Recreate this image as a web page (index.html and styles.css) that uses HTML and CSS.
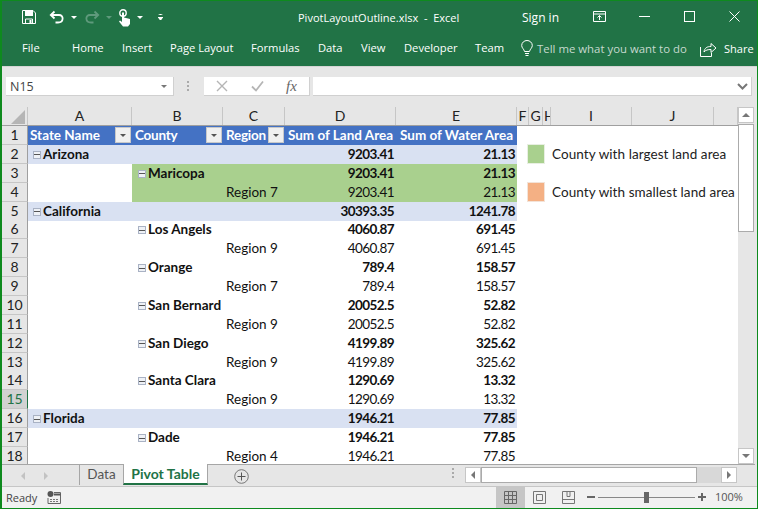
FILE: index.html
```html
<!DOCTYPE html>
<html>

<head>
  <meta charset="utf-8">
  <title>PivotLayoutOutline.xlsx - Excel</title>
  <link rel="stylesheet" href="styles.css">
</head>

<body>
  <div class="window">
    <div class="titlebar">
      <div class="qat">
        <svg class="ic-save" width="14" height="14" viewBox="0 0 14 14"><path d="M.5.5h10.5l2.5 2.5v10.5H.5z" fill="none" stroke="#fff"/><rect x="3" y="1" width="8" height="5" fill="#fff"/><path d="M3.5 13V9h7v4" fill="none" stroke="#fff"/><rect x="7.500" y="10" width="2" height="3" fill="#fff"/></svg>
        <svg class="ic-undo" width="16" height="14" viewBox="0 0 16 14"><path d="M5.500 1.500 1.800 5l3.700 3.500M2 5h8c5 0 5 7.500-1 7.500H6.500" fill="none" stroke="#fff" stroke-width="1.800"/></svg>
        <span class="caret ic-c1"></span>
        <svg class="ic-redo" width="16" height="14" viewBox="0 0 16 14"><path d="M10.500 1.500 14.200 5l-3.700 3.500M14 5H6c-5 0-5 7.500 1 7.500h2.500" fill="none" stroke="#5f9a7c" stroke-width="1.800"/></svg>
        <span class="caret dim ic-c2"></span>
        <svg class="ic-touch" width="14" height="18" viewBox="0 0 14 18"><circle cx="5" cy="4" r="3.200" fill="none" stroke="#fff" stroke-width="1.400"/><path d="M4 3.500h2v5l6 1.500v5l-2 2.500H5l-4-5 1-1 2 1.500z" fill="#fff"/></svg>
        <span class="caret ic-c3"></span>
        <span class="more ic-more"></span>
      </div>
      <div class="doc-title">PivotLayoutOutline.xlsx&nbsp; -&nbsp; Excel</div>
      <div class="signin">Sign in</div>
      <div class="win-btns">
        <svg width="14" height="11" viewBox="0 0 14 11"><path d="M.5.500h12v10H.5zM.5 3h12M6.500 9V4.500M4.500 6.500l2-2 2 2" fill="none" stroke="#fff"/></svg>
        <svg width="11" height="11" viewBox="0 0 11 11"><path d="M0 5.500h11" stroke="#fff"/></svg>
        <svg width="11" height="11" viewBox="0 0 11 11"><rect x=".5" y=".5" width="10" height="10" fill="none" stroke="#fff"/></svg>
        <svg width="11" height="11" viewBox="0 0 11 11"><path d="M.5.500l10 10M10.500.500l-10 10" stroke="#fff"/></svg>
      </div>
    </div>

    <div class="ribbon">
      <span class="tab tab-file">File</span>
      <span class="tab tab-home">Home</span>
      <span class="tab tab-insert">Insert</span>
      <span class="tab tab-layout">Page Layout</span>
      <span class="tab tab-formulas">Formulas</span>
      <span class="tab tab-data">Data</span>
      <span class="tab tab-view">View</span>
      <span class="tab tab-dev">Developer</span>
      <span class="tab tab-team">Team</span>
      <svg class="bulb" width="12" height="17" viewBox="0 0 12 17"><path d="M3.500 11.500C3 9 .7 8 .7 5.500a5.300 5 0 0 1 10.600 0C11.300 8 9 9 8.500 11.500zM4 13.500h4M4.500 15.500h3" fill="none" stroke="#fff"/></svg>
      <span class="tell">Tell me what you want to do</span>
      <svg class="share-ic" width="17" height="15" viewBox="0 0 17 15"><path d="M.5 5v9.500h11V11M4 10c.5-4 3-5.500 7-5.500V1.500l5 4.500-5 4.500V7.500c-3 0-5.500.5-7 2.500z" fill="none" stroke="#fff"/></svg>
      <span class="share">Share</span>
    </div>

    <div class="formula-band">
      <div class="name-box"><span>N15</span><i class="caret grey"></i></div>
      <div class="grip"></div>
      <div class="fx-buttons">
        <svg width="12" height="12" viewBox="0 0 12 12"><path d="M1 1l10 10M11 1 1 11" stroke="#b5b5b5" stroke-width="1.400"/></svg>
        <svg width="13" height="12" viewBox="0 0 13 12"><path d="M1 6.500l4 4 7-9" fill="none" stroke="#b5b5b5" stroke-width="1.800"/></svg>
        <span class="fx">fx</span>
      </div>
      <div class="formula-input"><svg width="11" height="7" viewBox="0 0 11 7"><path d="M1 1l4.500 4.500L10 1" fill="none" stroke="#777" stroke-width="2"/></svg></div>
    </div>

    <div class="sheet-area">
      <div class="sheet">
        <div class="row col-heads">
          <div class="corner"><i></i></div>
          <div>A</div><div>B</div><div>C</div><div>D</div><div>E</div><div>F</div><div>G</div><div class="clip">H</div><div>I</div><div>J</div><div></div>
        </div>

        <div class="row head">
          <div class="rh">1</div>
          <div class="c">State Name<b class="filter"></b></div>
          <div class="c">County<b class="filter"></b></div>
          <div class="c">Region<b class="filter"></b></div>
          <div class="c num-head">Sum of Land Area</div>
          <div class="c num-head">Sum of Water Area</div>
        </div>
        <div class="row total band">
          <div class="rh">2</div>
          <div class="c"><i class="minus"></i>Arizona</div><div class="c"></div><div class="c"></div><div class="c n">9203.41</div><div class="c n">21.13</div>
        </div>
        <div class="row total">
          <div class="rh">3</div>
          <div class="c"></div><div class="c green sub"><i class="minus"></i>Maricopa</div><div class="c green"></div><div class="c green n">9203.41</div><div class="c green n">21.13</div>
        </div>
        <div class="row">
          <div class="rh">4</div>
          <div class="c"></div><div class="c green"></div><div class="c green">Region 7</div><div class="c green n">9203.41</div><div class="c green n">21.13</div>
        </div>
        <div class="row total band">
          <div class="rh">5</div>
          <div class="c"><i class="minus"></i>California</div><div class="c"></div><div class="c"></div><div class="c n">30393.35</div><div class="c n">1241.78</div>
        </div>
        <div class="row total">
          <div class="rh">6</div>
          <div class="c"></div><div class="c sub"><i class="minus"></i>Los Angels</div><div class="c"></div><div class="c n">4060.87</div><div class="c n">691.45</div>
        </div>
        <div class="row">
          <div class="rh">7</div>
          <div class="c"></div><div class="c"></div><div class="c">Region 9</div><div class="c n">4060.87</div><div class="c n">691.45</div>
        </div>
        <div class="row total">
          <div class="rh">8</div>
          <div class="c"></div><div class="c sub"><i class="minus"></i>Orange</div><div class="c"></div><div class="c n">789.4</div><div class="c n">158.57</div>
        </div>
        <div class="row">
          <div class="rh">9</div>
          <div class="c"></div><div class="c"></div><div class="c">Region 7</div><div class="c n">789.4</div><div class="c n">158.57</div>
        </div>
        <div class="row total">
          <div class="rh">10</div>
          <div class="c"></div><div class="c sub"><i class="minus"></i>San Bernard</div><div class="c"></div><div class="c n">20052.5</div><div class="c n">52.82</div>
        </div>
        <div class="row">
          <div class="rh">11</div>
          <div class="c"></div><div class="c"></div><div class="c">Region 9</div><div class="c n">20052.5</div><div class="c n">52.82</div>
        </div>
        <div class="row total">
          <div class="rh">12</div>
          <div class="c"></div><div class="c sub"><i class="minus"></i>San Diego</div><div class="c"></div><div class="c n">4199.89</div><div class="c n">325.62</div>
        </div>
        <div class="row">
          <div class="rh">13</div>
          <div class="c"></div><div class="c"></div><div class="c">Region 9</div><div class="c n">4199.89</div><div class="c n">325.62</div>
        </div>
        <div class="row total">
          <div class="rh">14</div>
          <div class="c"></div><div class="c sub"><i class="minus"></i>Santa Clara</div><div class="c"></div><div class="c n">1290.69</div><div class="c n">13.32</div>
        </div>
        <div class="row">
          <div class="rh selected">15</div>
          <div class="c"></div><div class="c"></div><div class="c">Region 9</div><div class="c n">1290.69</div><div class="c n">13.32</div>
        </div>
        <div class="row total band">
          <div class="rh">16</div>
          <div class="c"><i class="minus"></i>Florida</div><div class="c"></div><div class="c"></div><div class="c n">1946.21</div><div class="c n">77.85</div>
        </div>
        <div class="row total">
          <div class="rh">17</div>
          <div class="c"></div><div class="c sub"><i class="minus"></i>Dade</div><div class="c"></div><div class="c n">1946.21</div><div class="c n">77.85</div>
        </div>
        <div class="row">
          <div class="rh">18</div>
          <div class="c"></div><div class="c"></div><div class="c">Region 4</div><div class="c n">1946.21</div><div class="c n">77.85</div>
        </div>

        <div class="legend legend-large"><i class="swatch sw-green"></i>County with largest land area</div>
        <div class="legend legend-small"><i class="swatch sw-orange"></i>County with smallest land area</div>
      </div>

      <div class="vscroll">
        <div class="sb-btn"><i class="tri-up"></i></div>
        <div class="sb-thumb"></div>
        <div class="sb-track"></div>
        <div class="sb-btn"><i class="tri-down"></i></div>
      </div>
    </div>

    <div class="tabs-bar">
      <i class="nav-left"></i>
      <i class="nav-right"></i>
      <div class="sheet-tab first">Data</div>
      <div class="sheet-tab active">Pivot Table</div>
      <div class="add-sheet"><svg width="15" height="15" viewBox="0 0 15 15"><circle cx="7.500" cy="7.500" r="6.800" fill="none" stroke="#777"/><path d="M7.500 3.500v8M3.500 7.500h8" stroke="#555"/></svg></div>
      <div class="grip tab-grip"></div>
      <div class="hscroll">
        <div class="sb-btn"><i class="tri-left"></i></div>
        <div class="h-thumb"></div>
        <div class="h-track"></div>
        <div class="sb-btn"><i class="tri-right"></i></div>
      </div>
    </div>

    <div class="statusbar">
      <span class="ready">Ready</span>
      <svg class="macro" width="14" height="13" viewBox="0 0 14 13"><circle cx="3.500" cy="3" r="3" fill="#555"/><path d="M7 1.500h6.500v11H1V7" fill="none" stroke="#666"/><path d="M7 3.500h6.500" stroke="#555" stroke-width="2"/><path d="M3 8.500h9M3 10.500h9" stroke="#777" stroke-dasharray="2 1"/></svg>
      <div class="views">
        <div class="view on"><svg width="13" height="13" viewBox="0 0 13 13"><path d="M.5.500h12v12H.5zM4.500.500v12M8.500.500v12M.5 4.500h12M.5 8.500h12" fill="none" stroke="#666"/></svg></div>
        <div class="view"><svg width="13" height="13" viewBox="0 0 13 13"><path d="M.5.500h12v12H.5zM3.500 3.500h6v6h-6z" fill="none" stroke="#777"/></svg></div>
        <div class="view"><svg width="13" height="13" viewBox="0 0 13 13"><path d="M.5.500h12v12H.5zM.5 8.500h12M5 .5v5h3V.5" fill="none" stroke="#777"/></svg></div>
      </div>
      <div class="zoom-ctl">
        <i class="z-minus"></i>
        <div class="z-slider"><i></i></div>
        <i class="z-plus"></i>
      </div>
      <span class="zoom-pct">100%</span>
    </div>
  </div>
</body>

</html>
```

FILE: styles.css
```css
* {
  box-sizing: border-box;
}

html, body {
  margin: 0;
  padding: 0;
  background: #e6e6e6;
}

i, b {
  display: block;
}

.window {
  width: 758px;
  height: 509px;
  display: flex;
  flex-direction: column;
  border: 1px solid #0e8a1e;
  border-left-width: 2px;
  overflow: hidden;
  font-family: "Open Sans", sans-serif;
}

/* title bar */
.titlebar {
  height: 32px;
  background: #217346;
  color: #fff;
  display: flex;
  align-items: center;
  flex: none;
  font-size: 11px;
}

.qat {
  width: 296px;
  height: 100%;
  position: relative;
  flex: none;
}

.qat svg, .qat span {
  position: absolute;
}

.ic-save { left: 20px; top: 9px; }
.ic-undo { left: 47px; top: 9px; }
.ic-c1 { left: 69px; top: 15px; }
.ic-redo { left: 82px; top: 9px; }
.ic-c2 { left: 104px; top: 15px; }
.ic-touch { left: 116px; top: 8px; }
.ic-c3 { left: 135px; top: 15px; }
.ic-more { left: 156px; top: 13px; }

.caret {
  display: block;
  width: 0;
  height: 0;
  border-left: 3px solid transparent;
  border-right: 3px solid transparent;
  border-top: 3px solid #fff;
}

.caret.dim {
  border-top-color: #5f9a7c;
}

.caret.grey {
  border-top-color: #777;
}

.more {
  display: block;
  width: 5px;
  height: 7px;
  border-top: 1px solid #fff;
  border-left: 2px solid transparent;
  border-right: 2px solid transparent;
  background: linear-gradient(#fff, #fff) center 2px / 5px 3px no-repeat;
  clip-path: polygon(0 0, 100% 0, 100% 50%, 50% 100%, 0 50%);
}

.doc-title {
  width: 224px;
  flex: none;
}

.signin {
  width: 71px;
  flex: none;
  font-size: 12px;
}

.win-btns {
  display: flex;
  align-items: center;
  gap: 34px;
}

.win-btns svg:first-child {
  margin-right: -2px;
}

.win-btns svg {
  position: relative;
  top: -1px;
}

/* ribbon tabs */
.ribbon {
  height: 33px;
  background: #217346;
  color: #fff;
  position: relative;
  flex: none;
  font-size: 11.200px;
}

.tab, .tell, .share, .bulb, .share-ic {
  position: absolute;
  top: 7px;
}

.tab-file { left: 20px; }
.tab-home { left: 70px; }
.tab-insert { left: 120px; }
.tab-layout { left: 168px; }
.tab-formulas { left: 249px; }
.tab-data { left: 316px; }
.tab-view { left: 359px; }
.tab-dev { left: 402px; }
.tab-team { left: 473px; }

.bulb { left: 519px; top: 7px; }
.tell { left: 535px; top: 8px; color: #c6d9cf; font-size: 11.400px; }
.share-ic { left: 698px; top: 9px; }
.share { left: 722px; top: 8px; font-size: 11px; }

/* formula bar */
.formula-band {
  height: 41px;
  flex: none;
  background: #e6e6e6;
  border-top: 1px solid #d4d4d4;
  display: flex;
  align-items: flex-start;
  padding: 10px 5px 0 4px;
}

.name-box {
  width: 168px;
  height: 19px;
  background: #fff;
  border-bottom: 1px solid #d0d0d0;
  border-right: 1px solid #d0d0d0;
  display: flex;
  align-items: center;
  justify-content: space-between;
  padding: 0 6px 0 4px;
  font-size: 12.500px;
  color: #444;
}

.grip {
  width: 2px;
  height: 11px;
  margin: 4px 15px 0 13px;
  background: repeating-linear-gradient(#aaa 0 2px, transparent 2px 4px);
}

.fx-buttons {
  width: 106px;
  height: 19px;
  background: #fff;
  border-bottom: 1px solid #d0d0d0;
  border-right: 1px solid #d0d0d0;
  display: flex;
  align-items: center;
  gap: 23px;
  padding-left: 12px;
}

.fx {
  font-family: "Liberation Serif", serif;
  font-style: italic;
  font-size: 15px;
  color: #666;
  margin-left: -1px;
}

.formula-input {
  flex: 1;
  height: 19px;
  margin-left: 3px;
  background: #fff;
  border-bottom: 1px solid #d0d0d0;
  border-right: 1px solid #d0d0d0;
  display: flex;
  align-items: center;
  justify-content: flex-end;
  padding-right: 3px;
}

/* sheet */
.sheet-area {
  height: 358px;
  flex: none;
  display: flex;
  background: #e6e6e6;
}

.sheet {
  width: 736px;
  flex: none;
  background: #fff;
  position: relative;
  font-family: Lato, "Liberation Sans", sans-serif;
  font-size: 13.500px;
  color: #111;
  overflow: hidden;
  border-bottom: 1px solid #a6a6a6;
}

.row {
  display: grid;
  grid-template-columns: 26px 104px 91px 62px 111px 121px;
  height: 18.880px;
  line-height: 18px;
}

.col-heads {
  grid-template-columns: 26px 104px 91px 62px 111px 121px 12px 14px 8px 81px 82px 1fr;
  height: 19px;
  background: #e6e6e6;
  border-bottom: 1px solid #9f9f9f;
  text-align: center;
  font-size: 14px;
  color: #222;
}

.col-heads > div {
  border-right: 1px solid #c6c6c6;
  overflow: hidden;
}

.col-heads > .clip {
  text-align: left;
  padding-left: 1px;
}

.corner {
  position: relative;
}

.corner i {
  position: absolute;
  right: 2px;
  bottom: 1px;
  width: 14px;
  height: 14px;
  background: #b5b5b5;
  clip-path: polygon(100% 0, 100% 100%, 0 100%);
}

.rh {
  background: #e6e6e6;
  border-right: 1px solid #9f9f9f;
  border-bottom: 1px solid #c6c6c6;
  text-align: center;
  font-size: 14px;
  color: #222;
}

.rh.selected {
  background: #d2d2d2;
  color: #217346;
  border-right: 1px solid #217346;
}

.c {
  padding-left: 3px;
  white-space: nowrap;
  position: relative;
  min-width: 0;
}

.row .rh + .c {
  padding-left: 2px;
}

.head .c {
  background: #4472c4;
  color: #fff;
  font-weight: 700;
}

.head .c:nth-child(3), .head .c:nth-child(4) {
  letter-spacing: -.25px;
}

.head .c.num-head {
  text-align: center;
  padding: 0;
}

.total .c {
  font-weight: 700;
}

.band .c {
  background: #d9e1f2;
}

.c.green {
  background: #a9d08e;
}

.c.n {
  text-align: right;
  padding: 0 2px 0 0;
  letter-spacing: -.55px;
}

.filter {
  position: absolute;
  right: 1px;
  top: 1px;
  width: 16px;
  height: 16px;
  background: #f0f0f0;
  border: 1px solid #c8c8c8;
}

.filter::after {
  content: "";
  position: absolute;
  left: 4px;
  top: 6px;
  border-left: 3px solid transparent;
  border-right: 3px solid transparent;
  border-top: 3px solid #555;
}

.minus {
  display: inline-block;
  width: 8px;
  height: 8px;
  margin: 0 2px 0 3px;
  border: 1px solid #a9b2c4;
  background: linear-gradient(#555, #555) center / 6px 1px no-repeat, #eef1f6;
}

.c.sub {
  padding-left: 3px;
}

.legend {
  position: absolute;
  left: 525px;
  display: flex;
  align-items: center;
  gap: 7px;
  height: 20px;
  white-space: nowrap;
  color: #222;
  letter-spacing: .07px;
}

.legend-large { top: 37px; }
.legend-small { top: 75px; }

.swatch {
  width: 18px;
  height: 20px;
  border: 1px solid #e8efe2;
}

.sw-green { background: #a9d08e; }
.sw-orange { background: #f4b084; border-color: #f3e3d8; }

/* scrollbars */
.vscroll {
  width: 17px;
  padding: 0 2px 0 0;
  display: flex;
  flex-direction: column;
  border-bottom: 1px solid #a6a6a6;
}

.sb-btn {
  flex: none;
  width: 16px;
  height: 16px;
  background: #fff;
  border: 1px solid #c6c6c6;
  display: flex;
  align-items: center;
  justify-content: center;
}

.sb-thumb {
  flex: none;
  height: 108px;
  background: #fff;
  border: 1px solid #ababab;
  margin: 1px 0 0;
  width: 16px;
}

.sb-track {
  flex: 1;
}

.tri-up, .tri-down, .tri-left, .tri-right {
  width: 0;
  height: 0;
}

.tri-up {
  border-left: 4px solid transparent;
  border-right: 4px solid transparent;
  border-bottom: 4px solid #777;
}

.tri-down {
  border-left: 4px solid transparent;
  border-right: 4px solid transparent;
  border-top: 4px solid #777;
}

.tri-left {
  border-top: 4px solid transparent;
  border-bottom: 4px solid transparent;
  border-right: 4px solid #777;
}

.tri-right {
  border-top: 4px solid transparent;
  border-bottom: 4px solid transparent;
  border-left: 4px solid #777;
}

/* sheet tabs */
.tabs-bar {
  height: 22px;
  flex: none;
  background: #e6e6e6;
  display: flex;
  align-items: flex-start;
  border-bottom: 1px solid #c6c6c6;
  position: relative;
  font-family: Lato, "Liberation Sans", sans-serif;
}

.nav-left, .nav-right {
  position: absolute;
  top: 7px;
  width: 0;
  height: 0;
  border-top: 4px solid transparent;
  border-bottom: 4px solid transparent;
}

.nav-left { left: 19px; border-right: 4px solid #c2c2c2; }
.nav-right { left: 42px; border-left: 4px solid #c2c2c2; }

.sheet-tab {
  height: 20px;
  line-height: 18px;
  font-size: 13.500px;
  color: #555;
  text-align: center;
}

.sheet-tab.first {
  margin-left: 77px;
  width: 44px;
  border-left: 1px solid #a6a6a6;
}

.sheet-tab.active {
  width: 85px;
  background: #fff;
  color: #217346;
  font-weight: 700;
  font-size: 14px;
  margin-top: -1px;
  height: 21px;
  line-height: 19px;
  border-left: 1px solid #a6a6a6;
  border-right: 1px solid #a6a6a6;
  border-bottom: 2px solid #217346;
}

.add-sheet {
  margin: 3px 0 0 26px;
  height: 15px;
}

.tab-grip {
  position: absolute;
  left: 450px;
  top: 3px;
  margin: 0;
}

.hscroll {
  position: absolute;
  left: 463px;
  top: 2px;
  width: 272px;
  display: flex;
}

.h-thumb {
  width: 216px;
  height: 16px;
  background: #fff;
  border: 1px solid #ababab;
}

.h-track {
  width: 24px;
  background: #d8d8d8;
}

/* status bar */
.statusbar {
  flex: 1;
  background: #f1f1f1;
  display: flex;
  align-items: center;
  position: relative;
  font-size: 11px;
  color: #444;
}

.ready {
  margin-left: 4px;
  width: 41px;
}

.views {
  position: absolute;
  left: 494px;
  top: 0;
  bottom: 0;
  display: flex;
}

.view {
  width: 29px;
  display: flex;
  align-items: center;
  justify-content: center;
}

.view.on {
  background: #c6c6c6;
}

.zoom-ctl {
  position: absolute;
  left: 585px;
  top: 4px;
  display: flex;
  align-items: center;
  height: 12px;
}

.z-minus {
  width: 8px;
  height: 2px;
  background: #666;
}

.z-slider {
  width: 97px;
  height: 1px;
  margin: 0 3px;
  background: #888;
  position: relative;
}

.z-slider i {
  position: absolute;
  left: 46px;
  top: -5px;
  width: 5px;
  height: 11px;
  background: #666;
}

.z-plus {
  width: 8px;
  height: 8px;
  background: linear-gradient(#666, #666) center / 8px 2px no-repeat, linear-gradient(#666, #666) center / 2px 8px no-repeat;
}

.zoom-pct {
  position: absolute;
  left: 713px;
  top: 2px;
  font-size: 11px;
  color: #555;
}
```
